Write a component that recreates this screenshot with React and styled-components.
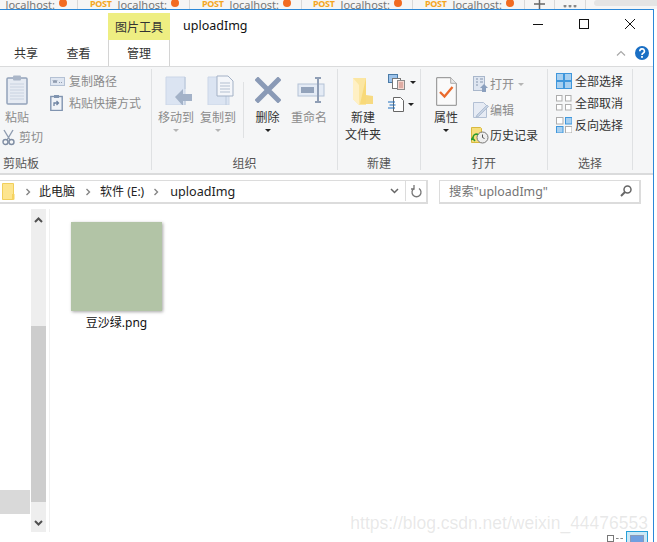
import React from 'react'
import styled, { createGlobalStyle } from 'styled-components'

const GlobalStyle = createGlobalStyle`
  html, body { margin: 0; padding: 0; background: #fff; }
  body { width: 657px; height: 542px; overflow: hidden; font-family: "Noto Sans", "Noto Sans CJK SC", sans-serif; }
  * { box-sizing: border-box; }
`

const Page = styled.div`
  width: 657px;
  height: 542px;
  display: flex;
  flex-direction: column;
  overflow: hidden;
  position: relative;
`

/* browser tabs cut off above the window */
const BrowserStrip = styled.div`
  height: 9px;
  flex: none;
  display: flex;
  align-items: flex-end;
  overflow: hidden;
  background: #f5f5f5;
`
const BrowserTab = styled.div`
  flex: none;
  width: ${({ $w }) => $w || 112}px;
  height: 9px;
  display: flex;
  align-items: flex-end;
  justify-content: flex-end;
  border-right: 1px solid #d8d8d8;
  padding-right: 10px;
  font-size: 11px;
  line-height: 11px;
  color: #777;
`
const Method = styled.span`
  color: #f5a623;
  font-weight: 700;
  font-size: 9px;
  margin-right: 6px;
  letter-spacing: -0.3px;
`
const Host = styled.span`
  margin-right: 4px;
  position: relative;
  top: 1px;
`
const Dot = styled.span`
  width: 8px;
  height: 8px;
  border-radius: 50%;
  background: #f26b21;
  margin-bottom: 2px;
`
const StripAction = styled.div`
  flex: none;
  width: ${({ $w }) => $w}px;
  height: 9px;
  border-right: 1px solid #d8d8d8;
  display: flex;
  justify-content: center;
  align-items: flex-end;
`
const StripPill = styled.div`
  flex: 1;
  height: 6px;
  margin: 0 0 3px 8px;
  border-radius: 3px 0 0 3px;
  background: #e4e4e4;
`

const Window = styled.div`
  flex: 1;
  width: 654px;
  min-height: 0;
  display: flex;
  flex-direction: column;
  border-top: 1px solid #2b88d8;
  border-right: 1px solid #2b88d8;
  background: #fff;
`

const TitleRow = styled.div`
  height: 30px;
  flex: none;
  display: flex;
  align-items: flex-end;
  padding-left: 108px;
`
const ContextTab = styled.div`
  width: 62px;
  height: 27px;
  background: #eeee82;
  color: #333;
  font-size: 12px;
  display: flex;
  align-items: center;
  justify-content: center;
`
const WindowTitle = styled.div`
  margin-left: 13px;
  height: 27px;
  line-height: 26px;
  font-size: 12.5px;
  color: #111;
  flex: 1;
`
const WindowButtons = styled.div`
  display: flex;
  height: 30px;
  align-items: center;
`
const WindowButton = styled.div`
  width: 46px;
  height: 30px;
  display: flex;
  align-items: center;
  justify-content: center;
  padding-bottom: 2px;
`

const TabRow = styled.div`
  height: 26px;
  flex: none;
  display: flex;
  align-items: stretch;
  padding-right: 4px;
`
const RibbonTab = styled.div`
  width: ${({ $w }) => $w}px;
  margin-left: ${({ $ml }) => $ml || 0}px;
  font-size: 12px;
  color: #333;
  display: flex;
  align-items: center;
  justify-content: center;
  padding-bottom: 1px;
  ${({ $active }) => $active && `
    border-left: 1px solid #d4d4d4;
    border-right: 1px solid #d4d4d4;
    background: #fff;
  `}
`
const TabSpacer = styled.div`
  flex: 1;
`
const TabTools = styled.div`
  display: flex;
  align-items: center;
  gap: 9px;
`

const Ribbon = styled.div`
  height: 109px;
  flex: none;
  display: flex;
  background: #f5f6f7;
  border-top: 1px solid #dadbdc;
  border-bottom: 2px solid #dadbdc;
  font-size: 12px;
`
const Group = styled.div`
  width: ${({ $w }) => $w}px;
  flex: none;
  display: flex;
  flex-direction: column;
  margin: 2px 0 3px;
  border-right: 1px solid #dfe1e3;
`
const GroupBody = styled.div`
  flex: 1;
  display: flex;
  align-items: flex-start;
  padding-left: ${({ $pl }) => $pl || 0}px;
  padding-top: 5px;
`
const GroupLabel = styled.div`
  height: 21px;
  line-height: 30px;
  text-align: ${({ $left }) => ($left ? 'left' : 'center')};
  padding-left: ${({ $left }) => ($left ? 3 : 0)}px;
  color: #555;
  font-size: 12px;
  white-space: nowrap;
`
const Column = styled.div`
  display: flex;
  flex-direction: column;
  width: ${({ $w }) => ($w ? `${$w}px` : 'auto')};
  gap: ${({ $gap }) => $gap || 0}px;
  margin-left: ${({ $ml }) => $ml || 0}px;
`
const LargeButton = styled.div`
  width: ${({ $w }) => $w}px;
  flex: none;
  display: flex;
  flex-direction: column;
  align-items: center;
  color: ${({ $off }) => ($off ? '#8c8c8c' : '#333')};
`
const LargeIcon = styled.div`
  height: 35px;
  padding: ${({ $pt }) => $pt ?? 2}px 0 0 ${({ $pl }) => $pl || 0}px;
  display: flex;
  align-items: flex-start;
  justify-content: center;
`
const LargeText = styled.div`
  line-height: 17px;
  text-align: center;
  white-space: nowrap;
`
const DropArrow = styled.div`
  width: 0;
  height: 0;
  margin-top: 3px;
  border-left: 3px solid transparent;
  border-right: 3px solid transparent;
  border-top: 3px solid ${({ $off }) => ($off ? '#b5b5b5' : '#222')};
`
const InlineArrow = styled(DropArrow)`
  margin: 0 0 0 ${({ $ml }) => $ml || 3}px;
`
const SmallButton = styled.div`
  height: ${({ $h }) => $h || 22}px;
  margin-left: ${({ $ml }) => $ml || 0}px;
  display: flex;
  align-items: center;
  gap: ${({ $gap }) => $gap ?? 4}px;
  color: ${({ $off }) => ($off ? '#8c8c8c' : '#333')};
  white-space: nowrap;
`
const VerticalRule = styled.div`
  width: 1px;
  height: 56px;
  margin: 8px 0 0 4px;
  background: #dfe1e3;
  flex: none;
`

const AddressArea = styled.div`
  height: 34px;
  flex: none;
  display: flex;
  align-items: flex-start;
  padding: 5px 0 0;
  font-size: 12px;
`
const AddressBar = styled.div`
  width: 428px;
  height: 24px;
  border: 2px solid #dcdcdc;
  border-width: 1px 2px 2px 0;
  display: flex;
  align-items: center;
  padding: 0 0 1px 2px;
  color: #222;
`
const Crumb = styled.span`
  margin-left: ${({ $ml }) => $ml ?? 9}px;
  font-size: 12px;
  white-space: nowrap;
`
const CrumbLatin = styled(Crumb)`
  font-size: 12.6px;
`
const AddressEnd = styled.div`
  margin-left: auto;
  display: flex;
  align-items: center;
  height: 100%;
`
const AddressDrop = styled.div`
  width: 22px;
  display: flex;
  justify-content: center;
`
const AddressRefresh = styled.div`
  width: 21px;
  height: 100%;
  display: flex;
  align-items: center;
  justify-content: center;
  border-left: 1px solid #dcdcdc;
`
const SearchBox = styled.div`
  width: 202px;
  height: 24px;
  margin-left: 11px;
  border: 2px solid #dcdcdc;
  border-width: 1px 2px 2px 1px;
  display: flex;
  align-items: center;
  justify-content: space-between;
  padding: 0 7px 1px 9px;
  color: #757575;
  font-size: 12.4px;
`

const Content = styled.div`
  flex: 1;
  min-height: 0;
  display: flex;
  padding-bottom: 10px;
`
const NavPane = styled.div`
  width: 31px;
  flex: none;
  display: flex;
  flex-direction: column;
  justify-content: flex-end;
  padding: 0 1px 18px 0;
`
const NavSelected = styled.div`
  height: 24px;
  background: #d9d9d9;
`
const ScrollBar = styled.div`
  width: 15px;
  flex: none;
  display: flex;
  flex-direction: column;
  background: #eeeeee;
`
const ScrollArrow = styled.div`
  height: ${({ $h }) => $h || 22}px;
  padding-top: ${({ $pt }) => $pt || 0}px;
  flex: none;
  display: flex;
  align-items: center;
  justify-content: center;
`
const ScrollRest = styled.div`
  flex: 1;
`
const ScrollThumb = styled.div`
  height: 176px;
  flex: none;
  background: #cdcdcd;
`
const PaneEdge = styled.div`
  width: 1px;
  margin-left: 3px;
  flex: none;
  background: #f0f0f0;
`
const FileArea = styled.div`
  flex: 1;
  padding: 13px 0 0 21px;
`
const FileItem = styled.div`
  width: 91px;
  display: flex;
  flex-direction: column;
  align-items: center;
`
const Thumb = styled.div`
  width: 91px;
  height: 89px;
  background: #b2c4a6;
  box-shadow: 1px 1px 3px rgba(0, 0, 0, 0.35);
`
const FileName = styled.div`
  margin-top: 3px;
  font-size: 12px;
  line-height: 18px;
  color: #111;
  white-space: nowrap;
`

const Watermark = styled.div`
  position: absolute;
  right: 9px;
  bottom: 8px;
  font-family: "Liberation Sans", sans-serif;
  font-size: 17.5px;
  color: rgba(150, 150, 150, 0.22);
  white-space: nowrap;
`
const ViewSwitch = styled.div`
  position: absolute;
  right: 9px;
  bottom: 0;
  display: flex;
  align-items: flex-end;
  gap: 3px;
`
const ViewDetails = styled.div`
  width: 16px;
  height: 5px;
  margin-bottom: 1px;
  display: flex;
  align-items: center;
  gap: 2px;
  &::before {
    content: '';
    width: 5px;
    height: 5px;
    border: 1px solid #777;
    flex: none;
  }
  &::after {
    content: '';
    flex: 1;
    height: 0;
    border-top: 1px dashed #888;
  }
`
const ViewLarge = styled.div`
  width: 22px;
  height: 11px;
  border: 1px solid #26a0da;
  border-bottom: none;
  background: #cbe8f6;
  padding: 3px 3px 0;
  &::before {
    content: '';
    display: block;
    height: 8px;
    border: 1px solid #8a9ab8;
    border-bottom: none;
    background: #6f9fe0;
  }
`

const Svg = ({ w, h, children }) => (
  <svg width={w} height={h} viewBox={`0 0 ${w} ${h}`} fill="none">
    {children}
  </svg>
)

const PasteIcon = () => (
  <Svg w={22} h={30}>
    <rect x="1" y="3" width="20" height="26" rx="1" fill="#e6ebf3" stroke="#93a3ba" strokeWidth="1.5" />
    <rect x="7" y="0.5" width="8" height="5" rx="1" fill="#aab6c8" />
    {[9, 12, 15, 18, 21, 24].map(y => <path key={y} d={`M4 ${y}h14`} stroke="#c9d2e0" />)}
  </Svg>
)
const ScissorsIcon = () => (
  <Svg w={13} h={17}>
    <path d="M2 1l6 10M11 1L5 11" stroke="#8f9cb0" strokeWidth="1.4" />
    <circle cx="3.5" cy="13" r="2.5" stroke="#7f8da3" strokeWidth="1.4" />
    <circle cx="9.5" cy="13" r="2.5" stroke="#7f8da3" strokeWidth="1.4" />
  </Svg>
)
const CopyPathIcon = () => (
  <Svg w={15} h={9}>
    <rect x="0.5" y="0.5" width="14" height="8" fill="#dfe6f1" stroke="#b4c1d4" />
    <path d="M3 3l1 3 1-3 1 3 1-3M9 5.5h1M11 5.5h1" stroke="#7c8aa0" strokeWidth="0.8" />
  </Svg>
)
const ShortcutIcon = () => (
  <Svg w={13} h={16}>
    <rect x="0.8" y="1.5" width="11.4" height="14" fill="#f0f3f8" stroke="#8094b0" strokeWidth="1.4" />
    <rect x="4" y="0" width="5" height="3" fill="#8094b0" />
    <path d="M4 11V8h4M6.500 6l2 2-2 2" stroke="#6d83a2" strokeWidth="1.3" />
  </Svg>
)
const MoveToIcon = () => (
  <Svg w={27} h={29}>
    <path d="M1 1h19v28H1z" fill="#dbe4f2" stroke="#cbd6e7" />
    <path d="M20 1v12M20 22v7" stroke="#b8c6da" />
    <path d="M10 21l8-8v5h9v7h-9v5z" fill="#a3b2c8" />
  </Svg>
)
const CopyToIcon = () => (
  <Svg w={27} h={30}>
    <path d="M1 2h21v28H1z" fill="#dbe4f2" stroke="#cbd6e7" />
    <path d="M19 2v28" stroke="#bccadd" />
    <path d="M10 1h11l5 5v15H10z" fill="#f4f6fa" stroke="#a3b1c6" />
    <path d="M13 8h10M13 11h10M13 14h10M13 17h10" stroke="#b3bfd0" />
  </Svg>
)
const DeleteIcon = () => (
  <Svg w={26} h={26}>
    <path d="M3 3l20 20M23 3L3 23" stroke="#8a9ab6" strokeWidth="5" strokeLinecap="square" />
  </Svg>
)
const RenameIcon = () => (
  <Svg w={29} h={26}>
    <rect x="1" y="7" width="26" height="12" fill="#e4ebf5" stroke="#b4c2d6" />
    <rect x="4" y="10" width="13" height="6" fill="#93a3bb" />
    <path d="M18 1h6M21 1v24M18 25h6" stroke="#8f9eb5" strokeWidth="2" />
  </Svg>
)
const FolderIcon = () => (
  <Svg w={22} h={28}>
    <path d="M1 1h13v27H7L1 22z" fill="#fbe6a2" />
    <path d="M14 1v17l7 1v8H8z" fill="#f7d774" opacity="0.9" />
    <path d="M1 1v21l6 6V8z" fill="#fff0c4" />
  </Svg>
)
const NewItemIcon = () => (
  <Svg w={18} h={16}>
    <rect x="0.5" y="0.5" width="9" height="8" fill="#9dc3ea" stroke="#4a7ba8" />
    <rect x="4.500" y="4.500" width="8" height="10" fill="#fff" stroke="#777" />
    <rect x="9.500" y="6.500" width="7" height="9" fill="#f5d7d0" stroke="#8c8c8c" />
    <path d="M11 9h4M11 11h4M11 13h4" stroke="#c8837a" />
  </Svg>
)
const EasyAccessIcon = () => (
  <Svg w={16} h={16}>
    <path d="M5.500 1.500h7l3 3v11h-10z" fill="#fff" stroke="#666" />
    <path d="M0 6h7M1.500 9h6M0 12h7" stroke="#1f6fc0" strokeWidth="1.2" />
  </Svg>
)
const PropertiesIcon = () => (
  <Svg w={21} h={29}>
    <path d="M0.700 0.700h14l5.600 5.600v22h-19.600z" fill="#fafafa" stroke="#8b8b8b" />
    <path d="M14.700 0.700v5.600h5.600" fill="#e9e9e9" stroke="#aaa" />
    <path d="M4 15l4.500 4.500L16.500 10" stroke="#ea6a2c" strokeWidth="2.300" />
  </Svg>
)
const OpenIcon = () => (
  <Svg w={16} h={16}>
    <rect x="0.500" y="0.500" width="11" height="14" fill="#dfe6f1" stroke="#a9b7cb" />
    <path d="M3 3h2M7 3h3M3 6h2M7 6h3M3 9h2" stroke="#8596ae" />
    <path d="M11 8l4 4h-2v4h-4v-4H7z" fill="#8ba0be" />
  </Svg>
)
const EditIcon = () => (
  <Svg w={16} h={16}>
    <path d="M0.500 0.500h10l3 3v12H0.500z" fill="#e6ebf4" stroke="#b3c0d4" />
    <path d="M4 13l10-10 1.500 1.500-10 10L3 15z" fill="#c6d2e3" stroke="#a1b1c8" strokeWidth="0.7" />
  </Svg>
)
const HistoryIcon = () => (
  <Svg w={18} h={17}>
    <path d="M0.500 0.500h9l1 1v14H0.500z" fill="#f6de7c" stroke="#d9b93f" />
    <circle cx="11.500" cy="10.500" r="5.500" fill="#eee" stroke="#777" />
    <path d="M11.500 7.500v3l2 1" stroke="#555" />
    <path d="M2 11a4 4 0 0 1 4-4l1 1M4 14l-2.500-3L0 13" stroke="#2c9a2c" strokeWidth="1.600" />
  </Svg>
)
const SelectIcon = ({ cells }) => {
  const on = cells.every(Boolean)
  const off = !cells.some(Boolean)
  const step = on ? 8 : 9
  const size = on ? 7 : off ? 5.5 : 6.5
  return (
    <Svg w={16} h={16}>
      {[[0, 0], [1, 0], [0, 1], [1, 1]].map(([c, r], i) => (
        <rect
          key={i}
          x={c * step + 0.5}
          y={r * step + 0.5}
          width={size}
          height={size}
          fill={cells[i] ? '#a8d0f0' : '#fff'}
          stroke={cells[i] ? '#3f97dc' : '#adadad'}
        />
      ))}
    </Svg>
  )
}
const SmallFolder = () => (
  <Svg w={13} h={17}>
    <path d="M0.500 0.500h11v16h-11z" fill="#fde58f" stroke="#f1cf5c" />
    <path d="M10 11h2.500v5.500H10z" fill="#f6d35f" />
  </Svg>
)
const CrumbChevron = () => (
  <Svg w={6} h={8}>
    <path d="M1.500 1l3 3-3 3" stroke="#858585" strokeWidth="1.400" />
  </Svg>
)

const tabs = [
  { w: 78, first: true },
  { w: 112 },
  { w: 112 },
  { w: 111 },
  { w: 112 },
]

export default function App() {
  return (
    <Page>
      <GlobalStyle />
      <BrowserStrip>
        {tabs.map((t, i) => (
          <BrowserTab key={i} $w={t.w}>
            {!t.first && <Method>POST</Method>}
            <Host>localhost:</Host>
            <Dot />
          </BrowserTab>
        ))}
        <StripAction $w={30}>
          <Svg w={11} h={9}><path d="M5.500 0v9M0 4h11" stroke="#666" strokeWidth="1.500" /></Svg>
        </StripAction>
        <StripAction $w={31}>
          <Svg w={16} h={4}>
            <circle cx="3" cy="1" r="1.500" fill="#888" />
            <circle cx="8" cy="1" r="1.500" fill="#888" />
            <circle cx="13" cy="1" r="1.500" fill="#888" />
          </Svg>
        </StripAction>
        <StripPill />
      </BrowserStrip>

      <Window>
        <TitleRow>
          <ContextTab>图片工具</ContextTab>
          <WindowTitle>uploadImg</WindowTitle>
          <WindowButtons>
            <WindowButton><Svg w={10} h={10}><path d="M0 5.500h10" stroke="#111" /></Svg></WindowButton>
            <WindowButton><Svg w={10} h={10}><rect x="0.500" y="0.500" width="9" height="9" stroke="#111" /></Svg></WindowButton>
            <WindowButton><Svg w={10} h={10}><path d="M0 0l10 10M10 0L0 10" stroke="#111" /></Svg></WindowButton>
          </WindowButtons>
        </TitleRow>

        <TabRow>
          <RibbonTab $w={52}>共享</RibbonTab>
          <RibbonTab $w={53}>查看</RibbonTab>
          <RibbonTab $w={62} $ml={3} $active>管理</RibbonTab>
          <TabSpacer />
          <TabTools>
            <Svg w={10} h={6}><path d="M1 5.500l4-4 4 4" stroke="#a8a8a8" strokeWidth="1.200" /></Svg>
            <Svg w={14} h={14}>
              <circle cx="7" cy="7" r="7" fill="#1a6fc4" />
              <path d="M4.800 5.200A2.300 2.300 0 1 1 8 7.300c-.7.400-1 .8-1 1.600" stroke="#fff" strokeWidth="1.600" />
              <rect x="6.100" y="10" width="1.800" height="1.800" fill="#fff" />
            </Svg>
          </TabTools>
        </TabRow>

        <Ribbon>
          <Group $w={152}>
            <GroupBody>
              <Column $w={50}>
                <LargeButton $w={34} $off>
                  <LargeIcon $pt={1}><PasteIcon /></LargeIcon>
                  <LargeText>粘贴</LargeText>
                </LargeButton>
                <SmallButton $off $h={22} $gap={4} $ml={2}>
                  <ScissorsIcon />
                  <span>剪切</span>
                </SmallButton>
              </Column>
              <Column $gap={8}>
                <SmallButton $off $h={14} $gap={4}>
                  <CopyPathIcon />
                  <span>复制路径</span>
                </SmallButton>
                <SmallButton $off $h={14} $gap={6}>
                  <ShortcutIcon />
                  <span>粘贴快捷方式</span>
                </SmallButton>
              </Column>
            </GroupBody>
            <GroupLabel $left>剪贴板</GroupLabel>
          </Group>

          <Group $w={186}>
            <GroupBody $pl={3}>
              <LargeButton $w={42} $off>
                <LargeIcon $pl={5}><MoveToIcon /></LargeIcon>
                <LargeText>移动到</LargeText>
                <DropArrow $off />
              </LargeButton>
              <LargeButton $w={42} $off>
                <LargeIcon $pt={1} $pl={5}><CopyToIcon /></LargeIcon>
                <LargeText>复制到</LargeText>
                <DropArrow $off />
              </LargeButton>
              <VerticalRule />
              <LargeButton $w={47}>
                <LargeIcon $pt={3}><DeleteIcon /></LargeIcon>
                <LargeText>删除</LargeText>
                <DropArrow />
              </LargeButton>
              <LargeButton $w={36} $off>
                <LargeIcon $pt={3} $pl={5}><RenameIcon /></LargeIcon>
                <LargeText>重命名</LargeText>
              </LargeButton>
            </GroupBody>
            <GroupLabel>组织</GroupLabel>
          </Group>

          <Group $w={83}>
            <GroupBody $pl={4}>
              <LargeButton $w={42}>
                <LargeIcon $pt={3}><FolderIcon /></LargeIcon>
                <LargeText>新建</LargeText>
                <LargeText>文件夹</LargeText>
              </LargeButton>
              <Column $gap={6} $ml={4}>
                <SmallButton $h={16} $gap={1}><NewItemIcon /><InlineArrow /></SmallButton>
                <SmallButton $h={16} $gap={1}><EasyAccessIcon /><InlineArrow /></SmallButton>
              </Column>
            </GroupBody>
            <GroupLabel>新建</GroupLabel>
          </Group>

          <Group $w={127}>
            <GroupBody $pl={2}>
              <LargeButton $w={46}>
                <LargeIcon $pt={3}><PropertiesIcon /></LargeIcon>
                <LargeText>属性</LargeText>
                <DropArrow />
              </LargeButton>
              <Column $ml={4} $gap={5.5}>
                <SmallButton $off $h={20} $gap={1}>
                  <OpenIcon /><span>打开</span><InlineArrow $off $ml={3} />
                </SmallButton>
                <SmallButton $off $h={20} $gap={1}>
                  <EditIcon /><span>编辑</span>
                </SmallButton>
                <SmallButton $h={20} $gap={1} $ml={-2}>
                  <HistoryIcon /><span>历史记录</span>
                </SmallButton>
              </Column>
            </GroupBody>
            <GroupLabel>打开</GroupLabel>
          </Group>

          <Group $w={85}>
            <GroupBody $pl={8}>
              <Column $gap={8}>
                <SmallButton $h={14} $gap={3}><SelectIcon cells={[1, 1, 1, 1]} /><span>全部选择</span></SmallButton>
                <SmallButton $h={14} $gap={3}><SelectIcon cells={[0, 0, 0, 0]} /><span>全部取消</span></SmallButton>
                <SmallButton $h={14} $gap={3}><SelectIcon cells={[0, 1, 1, 0]} /><span>反向选择</span></SmallButton>
              </Column>
            </GroupBody>
            <GroupLabel>选择</GroupLabel>
          </Group>
        </Ribbon>

        <AddressArea>
          <AddressBar>
            <SmallFolder />
            <Crumb $ml={10}><CrumbChevron /></Crumb>
            <Crumb $ml={8}>此电脑</Crumb>
            <Crumb $ml={10}><CrumbChevron /></Crumb>
            <Crumb $ml={9}>软件 (E:)</Crumb>
            <Crumb $ml={9}><CrumbChevron /></Crumb>
            <CrumbLatin $ml={11}>uploadImg</CrumbLatin>
            <AddressEnd>
              <AddressDrop>
                <Svg w={9} h={6}><path d="M1 1l3.500 3.500L8 1" stroke="#666" strokeWidth="1.500" /></Svg>
              </AddressDrop>
              <AddressRefresh>
                <Svg w={11} h={13}>
                  <path d="M3 3.500a4.500 4.500 0 1 0 5 0" stroke="#777" strokeWidth="1.300" />
                  <path d="M3 0v4H0" stroke="#777" strokeWidth="1.300" />
                </Svg>
              </AddressRefresh>
            </AddressEnd>
          </AddressBar>
          <SearchBox>
            <span>搜索"uploadImg"</span>
            <Svg w={12} h={12}>
              <circle cx="7.500" cy="4.500" r="3.500" stroke="#666" strokeWidth="1.500" />
              <path d="M5 7l-4 4" stroke="#666" strokeWidth="2" />
            </Svg>
          </SearchBox>
        </AddressArea>

        <Content>
          <NavPane><NavSelected /></NavPane>
          <ScrollBar>
            <ScrollArrow $h={22}>
              <Svg w={9} h={6}><path d="M1 5l3.500-3.500L8 5" stroke="#505050" strokeWidth="2" /></Svg>
            </ScrollArrow>
            <ScrollRest />
            <ScrollThumb />
            <ScrollArrow $h={30} $pt={12}>
              <Svg w={9} h={6}><path d="M1 1l3.500 3.500L8 1" stroke="#505050" strokeWidth="2" /></Svg>
            </ScrollArrow>
          </ScrollBar>
          <PaneEdge />
          <FileArea>
            <FileItem>
              <Thumb />
              <FileName>豆沙绿.png</FileName>
            </FileItem>
          </FileArea>
        </Content>
      </Window>

      <Watermark>https://blog.csdn.net/weixin_44476553</Watermark>
      <ViewSwitch>
        <ViewDetails />
        <ViewLarge />
      </ViewSwitch>
    </Page>
  )
}
